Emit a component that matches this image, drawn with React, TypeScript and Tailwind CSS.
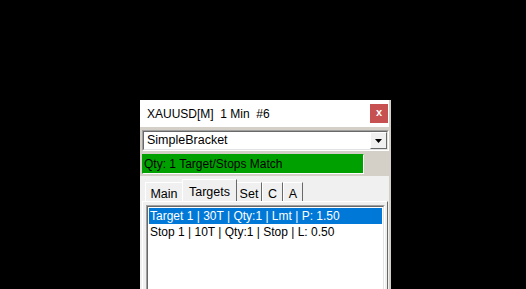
import React from 'react';

const tabs = [
  { label: 'Main', active: false, w: 'w-[38px]' },
  { label: 'Targets', active: true, w: 'w-[55px]' },
  { label: 'Set', active: false, w: 'w-[26px]' },
  { label: 'C', active: false, w: 'w-[21px]' },
  { label: 'A', active: false, w: 'w-[20px]' },
];

const rows = [
  'Target 1 | 30T | Qty:1 | Lmt | P: 1.50',
  'Stop 1 | 10T | Qty:1 | Stop | L: 0.50',
];

export default function App() {
  return (
    <div
      className="w-[526px] h-[289px] bg-black overflow-hidden pt-[100px] pl-[140px] text-[12px] text-black"
      style={{ fontFamily: '"Liberation Sans", Arial, sans-serif' }}
    >
      <div className="w-[251px] h-[189px] bg-[#f0f0f0] flex flex-col border-r-[2px] border-[#d4d0c8]">
        {/* title bar */}
        <div className="h-[27px] bg-white flex items-center justify-between pl-[7px] pr-[1px] shrink-0">
          <span className="pt-[1px]">XAUUSD[M]&nbsp; 1 Min&nbsp; #6</span>
          <div className="w-[18px] h-[19px] bg-[#c75050] text-white text-[11px] font-bold flex items-center justify-center leading-none pb-[2px]">
            x
          </div>
        </div>

        {/* upper grey area */}
        <div className="bg-[#d4d0c8] pl-[2px] pt-[3px] pb-[2px]">
          <div className="h-[21px] border border-[#a0a0a0] border-r-white border-b-white flex">
            <div className="flex-1 border border-[#696969] border-r-[#e3e3e3] border-b-[#e3e3e3] bg-white flex items-center justify-between">
              <span className="pl-[3px] text-[12.5px]">SimpleBracket</span>
              <div className="w-[17px] h-[17px] bg-[#f0f0f0] border border-white border-r-[#696969] border-b-[#696969] flex items-center justify-center">
                <svg width="7" height="4" viewBox="0 0 7 4">
                  <path d="M0 0h7L3.5 4z" fill="#000" />
                </svg>
              </div>
            </div>
          </div>

          <div className="mt-[3px] w-[222px] h-[20px] bg-[#00a000] border border-[#00a000] border-r-white border-b-white flex items-center pl-[1px]">
            Qty: 1 Target/Stops Match
          </div>
        </div>

        {/* tab strip */}
        <div className="mt-[3px] flex items-end pl-[5px] h-[22px] text-[12.5px]">
          {tabs.map((t) =>
            t.active ? (
              <div
                key={t.label}
                className={`${t.w} h-[22px] bg-[#f0f0f0] border border-b-0 border-[#696969] border-l-white border-t-white -mx-[1px] pt-[3px] text-center relative z-10`}
              >
                {t.label}
              </div>
            ) : (
              <div
                key={t.label}
                className={`${t.w} h-[19px] bg-[#f0f0f0] border border-b-0 border-l-white border-t-white border-r-[#696969] pt-[2px] text-center`}
              >
                {t.label}
              </div>
            )
          )}
        </div>

        {/* tab panel */}
        <div className="flex-1 ml-[2px] mr-[1px] bg-[#f0f0f0] border border-white border-b-0 border-r-[#696969] pt-[3px] pl-[3px] pr-[2px]">
          <div className="h-full border border-[#a0a0a0] border-b-0 border-r-white">
            <div className="h-full border border-[#696969] border-b-0 border-r-[#e3e3e3] bg-white pt-[1px] px-[1px]">
              {rows.map((r, i) => (
                <div
                  key={r}
                  className={`h-[16px] leading-[16px] pl-[1px] ${i === 0 ? 'bg-[#0078d7] text-white' : ''}`}
                >
                  {r}
                </div>
              ))}
            </div>
          </div>
        </div>
      </div>
    </div>
  );
}
